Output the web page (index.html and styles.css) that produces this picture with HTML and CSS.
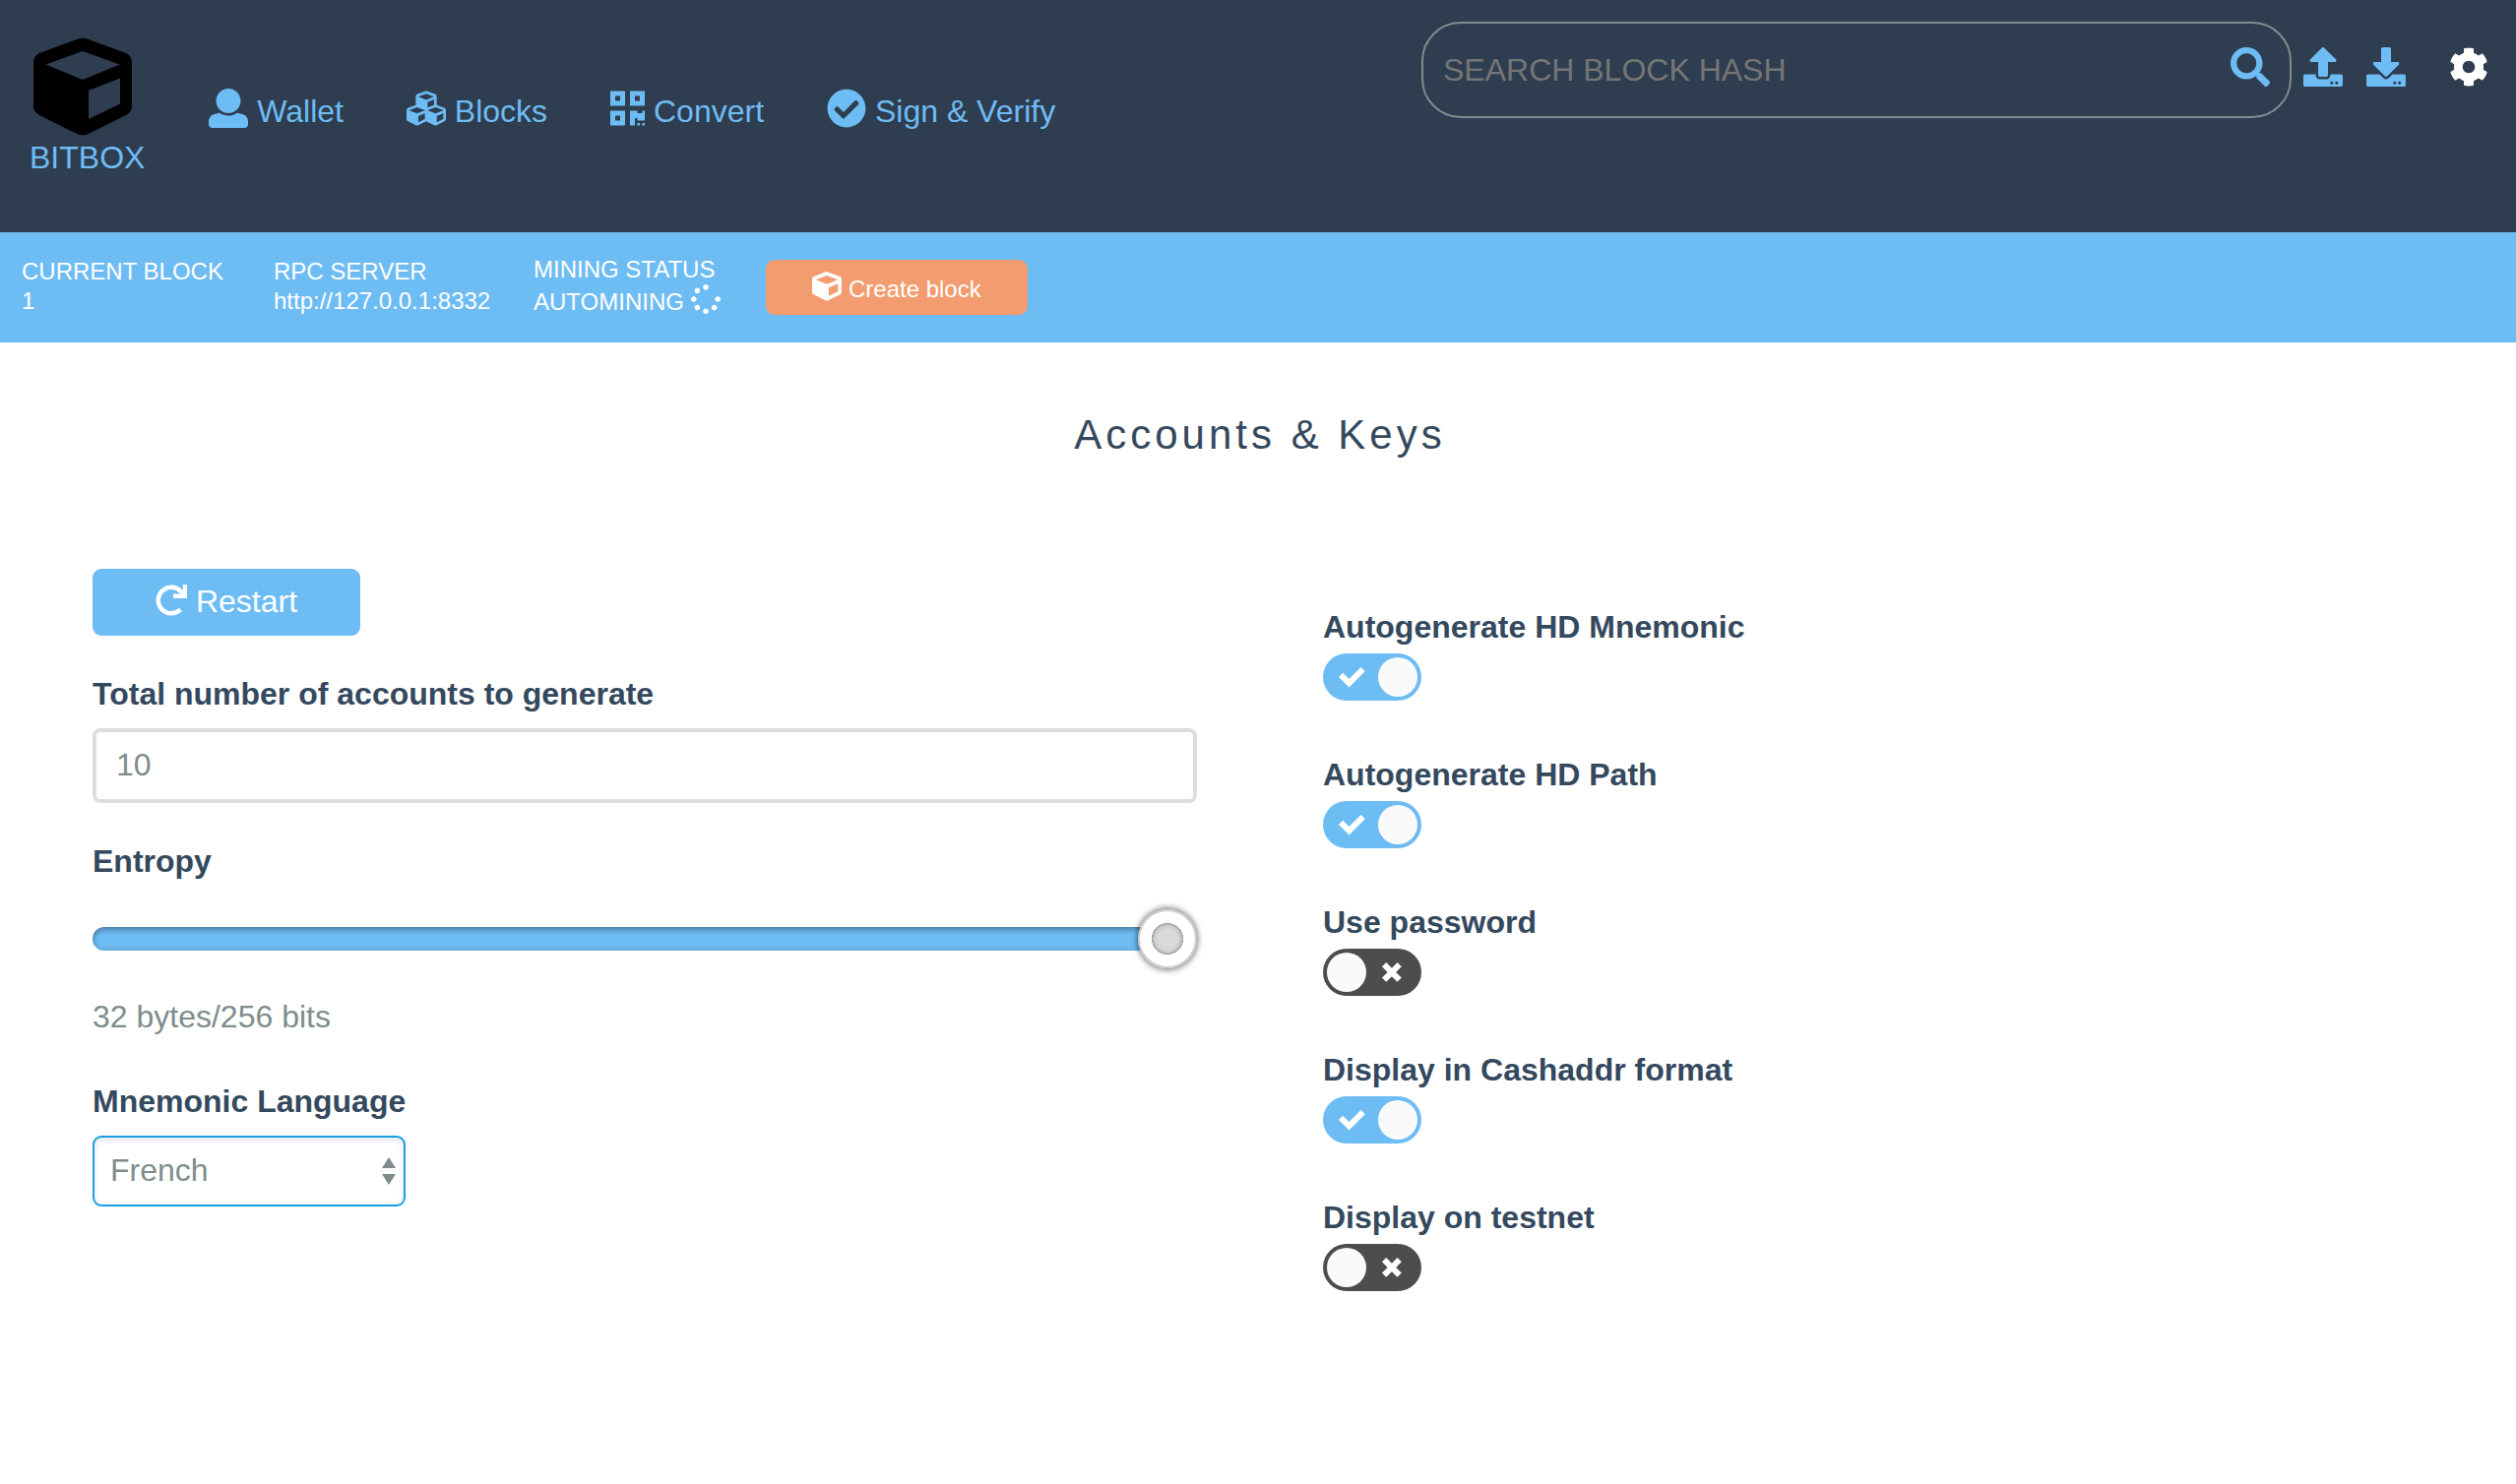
FILE: index.html
```html
<!DOCTYPE html>
<html lang="en">
<head>
<meta charset="utf-8">
<meta name="viewport" content="width=device-width, initial-scale=1">
<title>BITBOX - Accounts &amp; Keys</title>
<link rel="stylesheet" href="styles.css">
</head>
<body>
<header class="header">
  <a class="logo" href="#">
    <svg class="logo-mark" viewBox="-4 0 110 100" aria-hidden="true"><path fill="#000" fill-rule="evenodd" d="M44 2Q50-.5 56 2L94 16Q100 19 100 26V70Q100 76 94 79L56 98Q50 100.500 44 98L6 79Q0 76 0 70V26Q0 19 6 16ZM50 14L12.500 27.500L50 43L87.500 27.500ZM56 54V83L88 67.500V41.500Z"/></svg>
    <span>BITBOX</span>
  </a>
  <nav class="nav">
    <a href="#"><svg class="icon" viewBox="0 0 512 512" aria-hidden="true"><path d="M256 0c88.366 0 160 71.634 160 160s-71.634 160-160 160S96 248.366 96 160 167.634 0 256 0zm183.283 333.821l-71.313-17.828c-74.923 53.89-165.738 41.864-223.94 0l-71.313 17.828C29.981 344.505 0 382.903 0 426.955V464c0 26.51 21.49 48 48 48h416c26.51 0 48-21.49 48-48v-37.045c0-44.052-29.981-82.45-72.717-93.134z"/></svg> Wallet</a>
    <a href="#"><svg class="icon" viewBox="0 0 512 512" aria-hidden="true"><path d="M488.600 250.200L392 214V105.500c0-15-9.300-28.400-23.400-33.700l-100-37.500c-8.100-3.100-17.100-3.100-25.300 0l-100 37.500c-14.100 5.300-23.400 18.700-23.400 33.700V214l-96.600 36.200C9.300 255.500 0 268.900 0 283.900V394c0 13.600 7.700 26.100 19.900 32.200l100 50c10.100 5.100 22.100 5.100 32.200 0l103.900-52 103.900 52c10.100 5.100 22.100 5.100 32.200 0l100-50c12.200-6.100 19.900-18.600 19.900-32.200V283.900c0-15-9.300-28.400-23.400-33.700zM358 214.800l-85 31.900v-68.200l85-37v73.300zM154 104.100l102-38.200 102 38.200v.6l-102 41.400-102-41.400v-.6zm84 291.100l-85 42.500v-79.100l85-38.800v75.400zm0-112l-102 41.400-102-41.400v-.6l102-38.200 102 38.200v.6zm240 112l-85 42.500v-79.100l85-38.800v75.400zm0-112l-102 41.400-102-41.400v-.6l102-38.200 102 38.200v.6z"/></svg> Blocks</a>
    <a href="#"><svg class="icon icon-narrow" viewBox="0 0 448 512" aria-hidden="true"><path d="M0 224h192V32H0v192zM64 96h64v64H64V96zm192-64v192h192V32H256zm128 128h-64V96h64v64zM0 480h192V288H0v192zm64-128h64v64H64v-64zm352-64h32v128h-96v-32h-32v96h-64V288h96v32h64v-32zm0 160h32v32h-32v-32zm-64 0h32v32h-32v-32z"/></svg> Convert</a>
    <a href="#"><svg class="icon" viewBox="0 0 512 512" aria-hidden="true"><path d="M504 256c0 136.967-111.033 248-248 248S8 392.967 8 256 119.033 8 256 8s248 111.033 248 248zM227.314 387.314l184-184c6.248-6.248 6.248-16.379 0-22.627l-22.627-22.627c-6.248-6.249-16.379-6.249-22.628 0L216 308.118l-70.059-70.059c-6.248-6.248-16.379-6.248-22.628 0l-22.627 22.627c-6.248 6.248-6.248 16.379 0 22.627l104 104c6.249 6.249 16.379 6.249 22.628.001z"/></svg> Sign &amp; Verify</a>
  </nav>
  <div class="tools">
    <form class="search" role="search">
      <input type="text" placeholder="SEARCH BLOCK HASH" aria-label="Search block hash">
      <button class="icon-button" type="button" aria-label="Search"><svg viewBox="0 0 512 512" aria-hidden="true"><path d="M505 442.700L405.300 343c-4.500-4.500-10.600-7-17-7H372c27.600-35.300 44-79.700 44-128C416 93.100 322.900 0 208 0S0 93.100 0 208s93.100 208 208 208c48.300 0 92.700-16.400 128-44v16.300c0 6.400 2.500 12.500 7 17l99.700 99.700c9.400 9.400 24.600 9.400 33.900 0l28.300-28.300c9.400-9.400 9.400-24.600.1-34zM208 336c-70.700 0-128-57.200-128-128 0-70.700 57.200-128 128-128 70.700 0 128 57.200 128 128 0 70.700-57.200 128-128 128z"/></svg></button>
    </form>
    <div class="transfer">
      <button class="icon-button" type="button" aria-label="Export"><svg viewBox="0 0 512 512" aria-hidden="true"><path d="M296 384h-80c-13.300 0-24-10.700-24-24V192h-87.700c-17.800 0-26.700-21.500-14.100-34.100L242.300 5.700c7.500-7.500 19.800-7.500 27.300 0l152.200 152.200c12.600 12.600 3.700 34.100-14.100 34.100H320v168c0 13.300-10.700 24-24 24zm216-8v112c0 13.300-10.700 24-24 24H24c-13.300 0-24-10.700-24-24V376c0-13.300 10.700-24 24-24h136v8c0 30.900 25.100 56 56 56h80c30.900 0 56-25.100 56-56v-8h136c13.300 0 24 10.700 24 24zm-124 88c0-11-9-20-20-20s-20 9-20 20 9 20 20 20 20-9 20-20zm64 0c0-11-9-20-20-20s-20 9-20 20 9 20 20 20 20-9 20-20z"/></svg></button>
      <button class="icon-button" type="button" aria-label="Import"><svg viewBox="0 0 512 512" aria-hidden="true"><path d="M216 0h80c13.300 0 24 10.700 24 24v168h87.700c17.800 0 26.700 21.500 14.100 34.100L269.700 378.300c-7.500 7.500-19.800 7.500-27.300 0L90.100 226.100c-12.600-12.600-3.700-34.100 14.100-34.100H192V24c0-13.300 10.700-24 24-24zm296 376v112c0 13.300-10.700 24-24 24H24c-13.300 0-24-10.700-24-24V376c0-13.300 10.700-24 24-24h146.700l49 49c20.100 20.100 52.500 20.100 72.600 0l49-49H488c13.300 0 24 10.700 24 24zm-124 88c0-11-9-20-20-20s-20 9-20 20 9 20 20 20 20-9 20-20zm64 0c0-11-9-20-20-20s-20 9-20 20 9 20 20 20 20-9 20-20z"/></svg></button>
    </div>
    <button class="icon-button settings" type="button" aria-label="Settings"><svg viewBox="0 0 512 512" aria-hidden="true"><path d="M487.400 315.700l-42.600-24.600c4.300-23.200 4.300-47 0-70.200l42.600-24.600c4.900-2.800 7.100-8.600 5.500-14-11.100-35.600-30-67.800-54.700-94.600-3.800-4.100-10-5.100-14.800-2.300L380.800 110c-17.900-15.400-38.500-27.300-60.800-35.100V25.800c0-5.600-3.900-10.500-9.400-11.700-36.700-8.200-74.300-7.800-109.200 0-5.500 1.200-9.400 6.100-9.400 11.700V75c-22.200 7.900-42.800 19.800-60.800 35.100L88.700 85.500c-4.900-2.800-11-1.900-14.800 2.300-24.700 26.700-43.600 58.900-54.700 94.600-1.700 5.400.6 11.200 5.500 14L67.300 221c-4.300 23.200-4.300 47 0 70.200l-42.600 24.600c-4.900 2.800-7.100 8.600-5.500 14 11.100 35.600 30 67.800 54.700 94.600 3.800 4.100 10 5.100 14.800 2.300l42.600-24.600c17.900 15.400 38.500 27.300 60.800 35.100v49.200c0 5.600 3.900 10.500 9.400 11.700 36.700 8.200 74.300 7.800 109.200 0 5.500-1.200 9.400-6.100 9.400-11.700v-49.200c22.200-7.900 42.800-19.800 60.800-35.100l42.600 24.600c4.900 2.800 11 1.900 14.800-2.300 24.700-26.700 43.600-58.900 54.700-94.600 1.500-5.500-.7-11.300-5.600-14.100zM256 336c-44.100 0-80-35.900-80-80s35.900-80 80-80 80 35.900 80 80-35.900 80-80 80z"/></svg></button>
  </div>
</header>

<section class="status" aria-label="Node status">
  <div class="stat"><span>CURRENT BLOCK</span><span>1</span></div>
  <div class="stat"><span>RPC SERVER</span><span>http://127.0.0.1:8332</span></div>
  <div class="stat"><span>MINING STATUS</span><span>AUTOMINING <svg class="icon-small" viewBox="0 0 512 512" aria-hidden="true"><path d="M304 48c0 26.510-21.490 48-48 48s-48-21.490-48-48 21.490-48 48-48 48 21.490 48 48zm-48 368c-26.510 0-48 21.490-48 48s21.490 48 48 48 48-21.490 48-48-21.490-48-48-48zm208-208c-26.510 0-48 21.490-48 48s21.490 48 48 48 48-21.490 48-48-21.490-48-48-48zM96 256c0-26.510-21.490-48-48-48S0 229.490 0 256s21.490 48 48 48 48-21.490 48-48zm12.922 99.078c-26.510 0-48 21.490-48 48s21.490 48 48 48 48-21.490 48-48c0-26.509-21.491-48-48-48zm294.156 0c-26.510 0-48 21.490-48 48s21.490 48 48 48 48-21.490 48-48c0-26.509-21.490-48-48-48zM108.922 60.922c-26.510 0-48 21.490-48 48s21.490 48 48 48 48-21.490 48-48-21.491-48-48-48z"/></svg></span></div>
  <button class="button button-create" type="button"><svg class="icon-small" viewBox="0 0 512 512" aria-hidden="true"><path d="M239.100 6.300l-208 78c-18.700 7-31.100 25-31.100 45v225.100c0 18.200 10.300 34.800 26.500 42.900l208 104c13.500 6.800 29.400 6.800 42.900 0l208-104c16.300-8.100 26.500-24.800 26.500-42.900V129.300c0-20-12.400-37.900-31.100-44.900l-208-78C262 2.200 250 2.200 239.100 6.300zM256 68.400l192 72v1.100l-192 78-192-78v-1.100l192-72zm32 356V275.500l160-65v133.900l-160 80z"/></svg> Create block</button>
</section>

<main class="main">
  <h1>Accounts &amp; Keys</h1>
  <div class="columns">
    <form class="settings-form">
      <button class="button button-restart" type="button"><svg class="icon-redo" viewBox="0 0 512 512" aria-hidden="true"><path d="M500.330 0h-47.410a12 12 0 0 0-12 12.570l4 82.760A247.420 247.420 0 0 0 256 8C119.340 8 7.900 119.530 8 256.190 8.100 393.070 119.100 504 256 504a247.100 247.100 0 0 0 166.180-63.910 12 12 0 0 0 .48-17.430l-34-34a12 12 0 0 0-16.380-.55A176 176 0 1 1 402.100 157.800l-101.530-4.870a12 12 0 0 0-12.570 12v47.410a12 12 0 0 0 12 12h200.330a12 12 0 0 0 12-12V12a12 12 0 0 0-12-12z"/></svg> Restart</button>
      <div class="field">
        <label for="accounts">Total number of accounts to generate</label>
        <input class="text-input" id="accounts" type="text" placeholder="10">
      </div>
      <div class="field field-range">
        <label for="entropy">Entropy</label>
        <input class="range" id="entropy" type="range" min="16" max="32" step="4" value="32">
        <output for="entropy">32 bytes/256 bits</output>
      </div>
      <div class="field field-language">
        <label for="language">Mnemonic Language</label>
        <div class="select">
          <select id="language"><option>English</option><option selected>French</option><option>Spanish</option></select>
          <svg viewBox="0 0 14 28" aria-hidden="true"><path d="M7 0l7 11H0zM0 17h14L7 28z"/></svg>
        </div>
      </div>
    </form>
    <div class="toggles">
      <div class="toggle-row">
        <label for="auto-mnemonic">Autogenerate HD Mnemonic</label>
        <div class="toggle"><input id="auto-mnemonic" type="checkbox" checked><svg class="check" viewBox="0 0 14 11" aria-hidden="true"><path d="M11.264 0L5.260 6.004 2.103 2.847 0 4.950l5.260 5.260 8.108-8.107L11.264 0"/></svg></div>
      </div>
      <div class="toggle-row">
        <label for="auto-path">Autogenerate HD Path</label>
        <div class="toggle"><input id="auto-path" type="checkbox" checked><svg class="check" viewBox="0 0 14 11" aria-hidden="true"><path d="M11.264 0L5.260 6.004 2.103 2.847 0 4.950l5.260 5.260 8.108-8.107L11.264 0"/></svg></div>
      </div>
      <div class="toggle-row">
        <label for="use-password">Use password</label>
        <div class="toggle"><input id="use-password" type="checkbox"><svg class="cross" viewBox="0 0 10 10" aria-hidden="true"><path d="M9.900 2.120L7.780 0 4.950 2.828 2.120 0 0 2.120l2.830 2.830L0 7.776 2.123 9.900 4.950 7.070 7.780 9.900 9.900 7.776 7.072 4.950 9.900 2.120"/></svg></div>
      </div>
      <div class="toggle-row">
        <label for="cashaddr">Display in Cashaddr format</label>
        <div class="toggle"><input id="cashaddr" type="checkbox" checked><svg class="check" viewBox="0 0 14 11" aria-hidden="true"><path d="M11.264 0L5.260 6.004 2.103 2.847 0 4.950l5.260 5.260 8.108-8.107L11.264 0"/></svg></div>
      </div>
      <div class="toggle-row">
        <label for="testnet">Display on testnet</label>
        <div class="toggle"><input id="testnet" type="checkbox"><svg class="cross" viewBox="0 0 10 10" aria-hidden="true"><path d="M9.900 2.120L7.780 0 4.950 2.828 2.120 0 0 2.120l2.830 2.830L0 7.776 2.123 9.900 4.950 7.070 7.780 9.900 9.900 7.776 7.072 4.950 9.900 2.120"/></svg></div>
      </div>
    </div>
  </div>
</main>
</body>
</html>
```
FILE: styles.css
```css
:root {
  --blue: #6ebcf4;
  --navy: #2e3e50;
  --ink: #34495e;
  --grey: #7f8c8d;
}

* {
  box-sizing: border-box;
}

body {
  margin: 0;
  background: #fff;
  color: var(--grey);
  font: 32px/36px "Liberation Sans", Arial, sans-serif;
}

button,
input,
select {
  margin: 0;
  font: inherit;
}

svg {
  fill: currentColor;
}

/* Header */
.header {
  display: flex;
  align-items: flex-start;
  gap: 65px;
  min-height: 236px;
  padding: 0 28px 0 30px;
  background: var(--navy);
  color: var(--blue);
}

.header a {
  color: inherit;
  text-decoration: none;
}

.logo {
  display: flex;
  flex-direction: column;
  gap: 4px;
  padding-top: 38px;
}

.logo-mark {
  width: 110px;
  height: 100px;
}

.nav {
  display: flex;
  gap: 64px;
  padding-top: 90px;
  white-space: nowrap;
}

.icon {
  width: 40px;
  height: 40px;
  vertical-align: -6px;
}

.icon-narrow {
  width: 35px;
}

.tools {
  display: flex;
  flex: 1;
  justify-content: flex-end;
  padding-top: 22px;
}

.search {
  display: flex;
  flex: 0 1 884px;
  height: 98px;
  padding: 0 20px;
  border: 2px solid var(--grey);
  border-radius: 40px;
}

.search input {
  flex: 1;
  min-width: 0;
  padding: 0;
  border: 0;
  outline: 0;
  background: none;
  color: var(--blue);
}

.search input::placeholder {
  color: #757575;
}

.icon-button {
  flex: none;
  width: 40px;
  height: 40px;
  padding: 0;
  border: 0;
  background: none;
  color: inherit;
  cursor: pointer;
}

.icon-button svg {
  display: block;
  width: 40px;
  height: 40px;
}

.search .icon-button {
  margin-top: 24px;
}

.transfer {
  display: flex;
  gap: 24px;
  padding: 26px 44px 0 12px;
}

.settings {
  margin-top: 26px;
  color: #fff;
}

/* Status bar */
.status {
  display: grid;
  grid-template-columns: 256px 264px 236px auto;
  justify-content: start;
  align-items: center;
  min-height: 112px;
  padding: 0 22px;
  background: var(--blue);
  color: #fff;
  font-size: 24px;
  line-height: 30px;
}

.stat {
  display: flex;
  flex-direction: column;
  padding-bottom: 3px;
}

.icon-small {
  width: 30px;
  height: 30px;
  vertical-align: -4px;
}

.button {
  border: 0;
  border-radius: 9px;
  color: #fff;
  cursor: pointer;
}

.button-create {
  width: 266px;
  height: 56px;
  padding: 0;
  background: #f39c6f;
}

/* Content */
.main {
  padding: 70px 90px 80px 94px;
}

h1 {
  margin: 0 0 112px;
  color: var(--ink);
  font-size: 42px;
  font-weight: 400;
  line-height: 48px;
  letter-spacing: 4px;
  text-align: center;
}

.columns {
  display: grid;
  grid-template-columns: 1fr 1fr;
  gap: 128px;
}

.settings-form,
.field {
  display: flex;
  flex-direction: column;
}

.settings-form {
  gap: 41px;
}

label {
  color: var(--ink);
  font-weight: 700;
}

.field {
  gap: 17px;
}

.button-restart {
  width: 272px;
  height: 68px;
  padding: 0 0 2px;
  background: var(--blue);
}

.icon-redo {
  width: 32px;
  height: 32px;
  vertical-align: -4px;
}

.text-input {
  width: 100%;
  height: 76px;
  padding: 0 20px 2px;
  border: 4px solid #ddd;
  border-radius: 8px;
  background: #fff;
  color: var(--grey);
}

.text-input::placeholder {
  color: var(--grey);
}

.field-range {
  gap: 31px;
}

.range {
  width: 100%;
  height: 60px;
  background: none;
  appearance: none;
}

.range::-webkit-slider-runnable-track {
  height: 24px;
  border-radius: 12px;
  background: var(--blue);
  box-shadow: inset 0 2px 6px rgba(0, 0, 0, 0.4);
}

.range::-webkit-slider-thumb {
  width: 60px;
  height: 60px;
  margin-top: -18px;
  border: 2px solid #ccc;
  border-radius: 50%;
  background: radial-gradient(circle, #dadada 9px, #cfcfcf 13px, #a0a0a0 16px, #fff 16px);
  box-shadow: 0 2px 6px rgba(0, 0, 0, 0.4), 0 -2px 6px rgba(0, 0, 0, 0.4);
  appearance: none;
}

.field-language {
  align-items: flex-start;
  padding-top: 9px;
}

.select {
  position: relative;
}

.select select {
  width: 318px;
  height: 72px;
  padding: 0 16px 2px;
  border: 2px solid #1a9fe6;
  border-radius: 9px;
  background: #fff;
  box-shadow: inset 0 2px 6px rgba(0, 0, 0, 0.12);
  color: var(--grey);
  appearance: none;
}

.select svg {
  position: absolute;
  top: 22px;
  right: 10px;
  width: 14px;
  height: 28px;
  pointer-events: none;
}

/* Toggles */
.toggles {
  display: flex;
  flex-direction: column;
  gap: 57px;
  padding-top: 41px;
}

.toggle-row {
  display: flex;
  flex-direction: column;
  align-items: flex-start;
  gap: 9px;
}

.toggle {
  position: relative;
  display: flex;
  color: #fff;
}

.toggle input {
  display: flex;
  width: 100px;
  height: 48px;
  padding: 4px;
  border-radius: 24px;
  background: #4d4d4d;
  appearance: none;
  cursor: pointer;
}

.toggle input::before {
  content: "";
  width: 40px;
  height: 40px;
  border-radius: 50%;
  background: #fafafa;
}

.toggle input:checked {
  justify-content: flex-end;
  background: var(--blue);
}

.toggle svg {
  position: absolute;
  top: 14px;
  pointer-events: none;
}

.check {
  left: 16px;
  width: 28px;
  height: 22px;
}

.cross {
  left: 60px;
  width: 20px;
  height: 20px;
}
```
